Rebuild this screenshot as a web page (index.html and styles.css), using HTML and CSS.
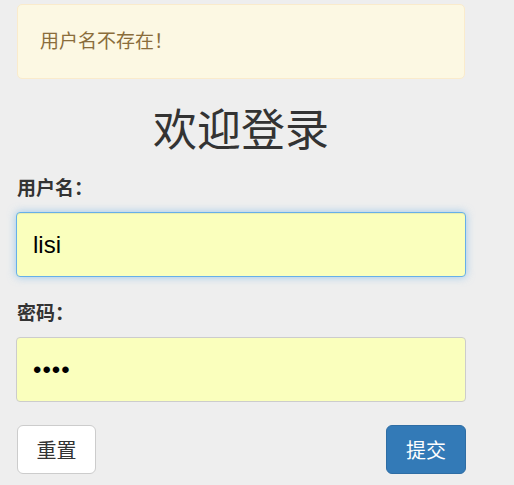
FILE: index.html
```html
<!DOCTYPE html>
<html lang="zh-CN">
<head>
  <meta charset="UTF-8" />
  <meta name="viewport" content="width=device-width, initial-scale=1.0"/>
  <title>欢迎登录</title>
  <link rel="stylesheet" href="styles.css">
</head>
<body>
  <div class="container">
    <div class="alert">用户名不存在！</div>

    <h1>欢迎登录</h1>

    <form class="login-form">
      <label for="username">用户名：</label>
      <input type="text" id="username" class="field focused" value="lisi" />

      <label for="password">密码：</label>
      <input type="password" id="password" class="field" value="1234" />

      <div class="actions">
        <button type="reset" class="btn btn-default">重置</button>
        <button type="submit" class="btn btn-primary">提交</button>
      </div>
    </form>
  </div>
</body>
</html>
```

FILE: styles.css
```css
* {
  box-sizing: border-box;
}

body {
  margin: 0;
  background: #eeeeee;
  color: #333;
  font-family: "Liberation Serif", "Noto Sans CJK SC", serif;
}

.container {
  width: 450px;
  margin-left: 16px;
  padding-top: 4px;
}

.alert {
  margin: 0 1px;
  padding: 24px 22px;
  line-height: 25px;
  font-size: 19px;
  color: #8a6d3b;
  background: #fcf8e3;
  border: 1px solid #faebcc;
  border-radius: 5px;
}

h1 {
  margin: 29px 0 20px;
  text-align: center;
  font-size: 44px;
  font-weight: 400;
  line-height: 48px;
  color: #333;
}

.login-form label {
  display: block;
  margin-left: 1px;
  font-size: 19px;
  line-height: 25px;
  font-weight: bold;
  color: #333;
}

.field {
  display: block;
  width: 100%;
  height: 65px;
  margin: 11px 0 24px;
  padding: 0 16px;
  font-family: "Liberation Sans", Arial, sans-serif;
  font-size: 24px;
  color: #000;
  background: #faffbd;
  border: 1px solid #ccc;
  border-radius: 4px;
  outline: none;
}

.field.focused {
  border-color: #66afe9;
  box-shadow: inset 0 1px 1px rgba(0, 0, 0, 0.075), 0 0 8px rgba(102, 175, 233, 0.6);
}

#password {
  margin-bottom: 23px;
  letter-spacing: 1px;
}

.actions {
  display: flex;
  justify-content: space-between;
  padding-left: 1px;
}

.btn {
  height: 49px;
  padding: 0;
  font-family: "Liberation Serif", "Noto Sans CJK SC", serif;
  font-size: 20px;
  white-space: nowrap;
  text-align: center;
  border-radius: 6px;
  border: 1px solid #ccc;
  cursor: pointer;
}

.btn-default {
  width: 79px;
  background: #fff;
  color: #333;
}

.btn-primary {
  width: 80px;
  background: #337ab7;
  border-color: #2e6da4;
  color: #fff;
}
```
